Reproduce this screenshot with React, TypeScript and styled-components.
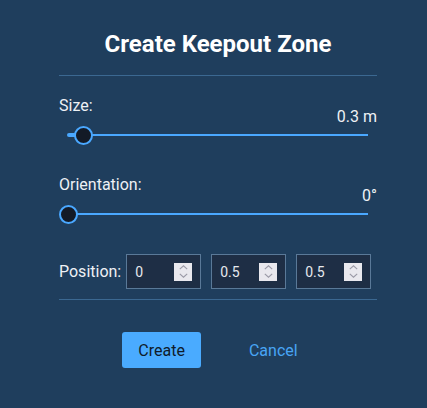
import React from 'react';
import styled, { createGlobalStyle } from 'styled-components';

const GlobalStyle = createGlobalStyle`
  html, body {
    margin: 0;
    padding: 0;
    background: #1f3e5d;
  }

  body {
    font-family: Roboto, 'Liberation Sans', sans-serif;
    color: #f2f4f7;
  }
`;

const Dialog = styled.section`
  width: 427px;
  height: 408px;
  box-sizing: border-box;
  padding: 30px 50px 0 59px;
  background: #1f3e5d;
`;

const Title = styled.h2`
  margin: 0;
  font-size: 24px;
  line-height: 28px;
  font-weight: 700;
  text-align: center;
  color: #ffffff;
`;

const Divider = styled.hr<{ $top: number; $bottom: number }>`
  border: 0;
  height: 1px;
  background: #3b6891;
  margin: ${(p) => p.$top}px 0 ${(p) => p.$bottom}px;
`;

const Field = styled.div`
  display: flex;
  flex-direction: column;
  margin-bottom: 31px;
`;

const Label = styled.label`
  font-size: 16px;
  line-height: 19px;
  color: #eef1f5;
`;

const Value = styled.div`
  margin-top: -8px;
  font-size: 16px;
  line-height: 19px;
  text-align: right;
  color: #eef1f5;
`;

const SliderBox = styled.div`
  position: relative;
  height: 18px;
  margin: 0 9.5px;
`;

const Rail = styled.div`
  position: absolute;
  left: 0;
  right: 0;
  top: 8px;
  height: 2px;
  background: #4aa8ff;
`;

const Fill = styled.div`
  position: absolute;
  left: -2px;
  top: 7px;
  height: 4px;
  border-radius: 2px;
  background: #4aa8ff;
`;

const Thumb = styled.div`
  position: absolute;
  top: -0.5px;
  width: 19px;
  height: 19px;
  box-sizing: border-box;
  margin-left: -9.5px;
  border-radius: 50%;
  border: 2px solid #4aa8ff;
  background: #131a26;
`;

function Slider({ value, min, max }: { value: number; min: number; max: number }) {
  const pct = ((value - min) / (max - min)) * 100;
  return (
    <SliderBox>
      <Rail />
      {pct > 0 && <Fill style={{ width: `calc(${pct}% + 2px)` }} />}
      <Thumb style={{ left: `${pct}%` }} />
    </SliderBox>
  );
}

const PositionRow = styled.div`
  display: flex;
  align-items: center;
  gap: 10px;
`;

const PositionLabel = styled(Label)`
  margin-right: -5px;
`;

const NumberBox = styled.div`
  display: flex;
  align-items: center;
  width: 75px;
  height: 35px;
  box-sizing: border-box;
  padding: 0 8px;
  border: 1px solid #5a7998;
  background: #1e2e45;
`;

const NumberInput = styled.input`
  flex: 1;
  min-width: 0;
  border: 0;
  padding: 0;
  background: transparent;
  font-family: Roboto, 'Liberation Sans', sans-serif;
  font-size: 14px;
  color: #e6e9ee;
  outline: none;
`;

const Spinner = styled.span`
  display: flex;
  flex-direction: column;
  align-items: center;
  justify-content: center;
  gap: 3px;
  width: 18px;
  height: 18px;
  background: #e9e8ee;
`;

function NumberField({ value }: { value: string }) {
  return (
    <NumberBox>
      <NumberInput type="text" defaultValue={value} />
      <Spinner>
        <svg width="9" height="5" viewBox="0 0 9 5">
          <path d="M0.8 4.2 L4.5 0.8 L8.2 4.2" fill="none" stroke="#9a99a6" strokeWidth="1.1" />
        </svg>
        <svg width="9" height="5" viewBox="0 0 9 5">
          <path d="M0.8 0.8 L4.5 4.2 L8.2 0.8" fill="none" stroke="#9a99a6" strokeWidth="1.1" />
        </svg>
      </Spinner>
    </NumberBox>
  );
}

const Actions = styled.div`
  display: flex;
  justify-content: center;
  align-items: center;
  gap: 32px;
`;

const PrimaryButton = styled.button`
  height: 36px;
  padding: 0 16px;
  border: 0;
  border-radius: 3px;
  background: #4aabff;
  color: #0f1b2b;
  font-family: Roboto, 'Liberation Sans', sans-serif;
  font-size: 16px;
`;

const TextButton = styled.button`
  height: 36px;
  padding: 0 16px;
  border: 0;
  background: transparent;
  color: #48a5f5;
  font-family: Roboto, 'Liberation Sans', sans-serif;
  font-size: 16px;
`;

export default function App() {
  return (
    <>
      <GlobalStyle />
      <Dialog>
        <Title>Create Keepout Zone</Title>
        <Divider $top={17} $bottom={20} />
        <Field>
          <Label>Size:</Label>
          <Value>0.3 m</Value>
          <Slider value={0.3} min={0.1} max={4} />
        </Field>
        <Field>
          <Label>Orientation:</Label>
          <Value>0°</Value>
          <Slider value={0} min={0} max={360} />
        </Field>
        <PositionRow>
          <PositionLabel>Position:</PositionLabel>
          <NumberField value="0" />
          <NumberField value="0.5" />
          <NumberField value="0.5" />
        </PositionRow>
        <Divider $top={10} $bottom={32} />
        <Actions>
          <PrimaryButton>Create</PrimaryButton>
          <TextButton>Cancel</TextButton>
        </Actions>
      </Dialog>
    </>
  );
}
